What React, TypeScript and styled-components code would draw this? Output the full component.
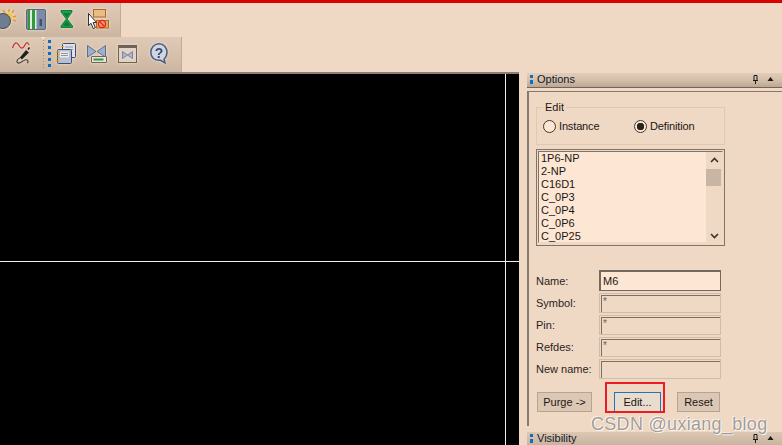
import React from "react";
import styled, { createGlobalStyle } from "styled-components";

const Global = createGlobalStyle`
  html, body { margin: 0; padding: 0; background: #f0d9c4; }
  * { box-sizing: border-box; }
`;

const Page = styled.div`
  position: relative;
  width: 782px;
  height: 445px;
  overflow: hidden;
  display: flex;
  flex-direction: column;
  background: #f0d9c4;
  font-family: "Liberation Sans", Arial, sans-serif;
  font-size: 11px;
  color: #1c1612;
`;
const RedBar = styled.div`
  height: 3px;
  flex: none;
  background: #d90000;
`;
const Toolbar = styled.div<{ $w: number; $h: number; $pad: number; $gap: number }>`
  display: flex;
  align-items: center;
  flex: none;
  width: ${(p) => p.$w}px;
  height: ${(p) => p.$h}px;
  padding: 0 0 2px ${(p) => p.$pad}px;
  gap: ${(p) => p.$gap}px;
  background: linear-gradient(#dfcab7, #d6c0ac 55%, #cbb5a1);
  border-right: 1px solid #c2ac98;
  svg {
    flex: none;
    filter: drop-shadow(0 0 1.5px #efe0d0);
  }
`;
const LeadIcon = styled.span`
  display: flex;
  margin-right: -4px;
`;
const Grip = styled.div`
  position: relative;
  flex: none;
  display: flex;
  gap: 4px;
  height: 35px;
  align-items: center;
  margin: 0 -7px -2px 0;
`;
const GripDots = styled.span`
  width: 1px;
  height: 30px;
  background: repeating-linear-gradient(#8f9c78 0 1px, transparent 1px 3px);
  &::before {
    content: "";
    position: absolute;
    top: 0;
    left: -2px;
    border: 2.5px solid transparent;
    border-top: 3px solid #f0e2d4;
  }
`;
const GripBlue = styled.span`
  width: 3px;
  height: 27px;
  margin-bottom: 2px;
  background: repeating-linear-gradient(#0a6fc2 0 3px, transparent 3px 6px);
`;
const Main = styled.div`
  flex: 1;
  display: flex;
  min-height: 0;
`;
const Canvas = styled.div`
  position: relative;
  flex: none;
  width: 519px;
  background: #000;
  border-top: 2px solid #8d8073;
`;
const VLine = styled.div`
  position: absolute;
  top: 0;
  bottom: 0;
  left: 505px;
  width: 1px;
  background: #f4efe8;
`;
const HLine = styled.div`
  position: absolute;
  left: 0;
  right: 0;
  top: 187px;
  height: 1px;
  background: #f4efe8;
`;
const Side = styled.div`
  flex: 1;
  margin-left: 8px;
  padding-top: 1px;
  display: flex;
  flex-direction: column;
  min-width: 0;
`;
const Head = styled.div`
  flex: none;
  height: 15px;
  display: flex;
  align-items: center;
  padding: 0 0 2px 3px;
  background: linear-gradient(#e2cdb9, #d4bfab 50%, #bda793);
  border-bottom: 1px solid #6f655b;
  position: relative;
`;
const HeadDots = styled.span`
  width: 3px;
  height: 9px;
  margin-right: 4px;
  background: linear-gradient(#0a6fc2 0 3.5px, transparent 3.5px 5.5px, #0a6fc2 5.5px);
`;
const HeadTitle = styled.span`
  flex: 1;
  font-size: 11px;
  color: #10182a;
`;
const HeadIcons = styled.span`
  display: flex;
  align-items: center;
  gap: 8px;
  margin-right: -4px;
`;
const Body = styled.div`
  flex: none;
  height: 335px;
  margin-top: 3px;
  border-left: 2px solid #867a6e;
  border-top: 1px solid #867a6e;
  padding: 9px 0 0 7px;
  display: flex;
  flex-direction: column;
  width: 100%;
`;
const Group = styled.fieldset`
  width: 189px;
  height: 44px;
  margin: 0;
  padding: 6px 0 0 6px;
  border: 1px solid #e0c8b3;
  display: flex;
  align-items: flex-start;
  font-size: 11px;
  min-inline-size: 0;
`;
const Legend = styled.legend`
  margin-left: 0;
  padding: 0 2px;
  font-size: 11px;
  line-height: 12px;
`;
const RadioLabel = styled.label<{ $w: number }>`
  display: flex;
  align-items: center;
  width: ${(p) => p.$w}px;
  gap: 3px;
  height: 14px;
  letter-spacing: -0.15px;
`;
const Radio = styled.input.attrs({ type: "radio" })`
  appearance: none;
  margin: 0;
  width: 13px;
  height: 13px;
  border: 1px solid #40382f;
  border-radius: 50%;
  background: #fde7d4;
  position: relative;
  &:checked {
    background: radial-gradient(circle, #2a2420 0 3.5px, #fde7d4 4px);
  }
`;
const ListOuter = styled.div`
  margin-top: 4px;
  width: 189px;
  height: 97px;
  padding: 1px 1px 2px 1px;
  border: 1px solid #7e7469;
  background: #f0d9c4;
  flex: none;
`;
const ListInner = styled.div`
  height: 100%;
  display: flex;
  border: 1px solid #7e7469;
  border-right-color: #f0d9c4;
  border-bottom-color: #f0d9c4;
  background: #fde7d4;
`;
const Items = styled.ul`
  flex: 1;
  margin: 0;
  padding: 0 0 0 2px;
  list-style: none;
  line-height: 13px;
  overflow: hidden;
  font-size: 11px;
`;
const ScrollBar = styled.div`
  position: relative;
  flex: none;
  width: 16px;
  background: #f0d9c4;
  display: flex;
  flex-direction: column;
  align-items: center;
  justify-content: space-between;
  padding: 5px 0 3px;
`;
const Thumb = styled.div`
  position: absolute;
  top: 17px;
  left: 0;
  width: 15px;
  height: 17px;
  background: #c9b5a3;
`;
const Form = styled.div`
  margin-top: 24px;
  display: grid;
  grid-template-columns: 63px 122px;
  row-gap: 2px;
  align-items: center;
`;
const FieldLabel = styled.label`
  font-size: 11px;
  color: #2a231d;
`;
const Field = styled.input<{ $on?: boolean }>`
  width: 122px;
  height: ${(p) => (p.$on ? 21 : 20)}px;
  margin: 0;
  padding: ${(p) => (p.$on ? "0 0 0 3px" : "0 0 3px 3px")};
  font-family: inherit;
  font-size: ${(p) => (p.$on ? 11 : 10)}px;
  color: ${(p) => (p.$on ? "#1c1612" : "#6b6055")};
  outline: none;
  background: ${(p) => (p.$on ? "#fde7d4" : "#f0d9c4")};
  border: 1px solid ${(p) => (p.$on ? "#75695d" : "#d3bca7")};
  box-shadow: ${(p) => (p.$on ? "inset 1px 1px 0 #75695d" : "inset 1px 1px 0 #f0d9c4, inset 2px 2px 0 #7b6f63")};
`;
const Buttons = styled.div`
  margin-top: 13px;
  padding-left: 1px;
  display: flex;
  gap: 22px;
`;
const Btn = styled.button<{ $w: number }>`
  position: relative;
  width: ${(p) => p.$w}px;
  height: 20px;
  padding: 0;
  font-family: inherit;
  font-size: 11px;
  color: #1c1612;
  background: #dcc7b4;
  border: 1px solid #b6a391;
  &:last-child {
    margin-left: -6px;
  }
`;
const EditBtn = styled(Btn)`
  background: #e9dccf;
  border: 1px solid #1877bd;
  border-bottom-color: #e9dccf;
`;
const RedBox = styled.span`
  position: absolute;
  top: -11px;
  left: -10px;
  right: -5px;
  bottom: -2px;
  border: 2px solid #ed1c24;
  pointer-events: none;
`;
const VisHead = styled(Head)`
  margin-top: 6px;
  background: linear-gradient(#dcc7b3, #c8b29e);
`;
const Watermark = styled.div`
  position: absolute;
  left: 591px;
  top: 414px;
  font-size: 18px;
  line-height: 21px;
  letter-spacing: 0.3px;
  color: #a39c96;
  text-shadow: 0 0 1px #fff, 1px 1px 0 rgba(255, 255, 255, 0.8), -1px -1px 0 rgba(255, 255, 255, 0.55);
  white-space: nowrap;
`;

const Sun = () => (
  <svg width="16" height="20" viewBox="0 0 16 20">
    <g stroke="#e8961a" strokeWidth="1.4">
      <path d="M9 0v3M14 1l-2 3M16 7l-3 1M16 12l-3-1M3 1l2 3" />
    </g>
    <circle cx="8" cy="8" r="4.5" fill="#f6c24a" />
    <circle cx="3" cy="12" r="7.500" fill="#6f7d90" stroke="#434c5c" />
  </svg>
);
const Panels = () => (
  <svg width="20" height="21" viewBox="0 0 20 21">
    <rect x="0.5" y="0.5" width="19" height="20" rx="1.5" fill="#7d8ca6" stroke="#5a6780" />
    <rect x="2" y="1" width="2" height="19" fill="#2f9a3e" />
    <rect x="4" y="1" width="2" height="19" fill="#e4ecdf" />
    <rect x="6" y="1" width="3" height="19" fill="#2f9a3e" />
    <rect x="9" y="1" width="1.500" height="19" fill="#e4ecdf" />
    <rect x="13.500" y="10" width="2.500" height="7" fill="#44526c" />
  </svg>
);
const Hourglass = () => (
  <svg width="14" height="18" viewBox="0 0 14 18">
    <path d="M1 0.5h11v1.5L7.5 8.6v.8L12.5 16v1.5H1V16l5-6.6v-.8L1 2z" fill="#16a24a" stroke="#0b6a30" strokeWidth=".8" />
    <path d="M3.4 3h6.6L6.7 7.5z" fill="#0e7a38" />
    <path d="M6.7 11l4 5H2.8z" fill="#0c7c37" />
  </svg>
);
const CursorIcon = () => (
  <svg width="21" height="21" viewBox="0 0 21 21">
    <rect x="5.5" y="0.5" width="12" height="7.5" fill="#e6bd85" stroke="#b4691f" />
    <rect x="8.5" y="11.5" width="12" height="7.5" fill="#e0a868" stroke="#b4691f" />
    <circle cx="14" cy="15" r="3.6" fill="none" stroke="#ee1c25" strokeWidth="1.3" />
    <path d="M11.5 12.5l5 5" stroke="#ee1c25" strokeWidth="1.2" />
    <path d="M0.5 4.5v12l2.6-2.2 2.2 5.3 2-1-2.2-5 3.4-.2z" fill="#fff" stroke="#1a1a1a" strokeWidth=".9" />
  </svg>
);
const Probe = () => (
  <svg width="20" height="23" viewBox="0 0 20 23">
    <path d="M0.5 6C3 -1 5 0 7 3.5S11 7 13 3 16 1 17 3" fill="none" stroke="#c8322a" strokeWidth="1.3" />
    <path d="M14 8l3 2.5-7 7-2.2-2z" fill="#24201d" />
    <path d="M16 7.5l1.5-2" stroke="#24201d" strokeWidth="1.4" />
    <path d="M8 16c-3 1-4 4-2 5s4-2 7-3 4 2 2 3" fill="none" stroke="#4a423b" strokeWidth="1.2" />
  </svg>
);
const Stack = () => (
  <svg width="21" height="21" viewBox="0 0 21 21">
    <rect x="7.5" y="0.5" width="13" height="14" rx="1" fill="#dfe2e6" stroke="#3d4d72" />
    <path d="M10 4h8M10 6.5h8" stroke="#8b95a8" />
    <rect x="2.5" y="6.5" width="14" height="14" rx="1" fill="#b7c0d2" stroke="#3d4d72" />
    <rect x="5" y="8.5" width="9" height="6" fill="#eceae4" />
    <path d="M6 10.5h7M6 12.5h7" stroke="#8b95a8" />
    <path d="M0.5 9h4M0.5 12h4M0.5 15h4M0.5 18h4M6 3.5h3" stroke="#e0a21e" strokeWidth="1.2" />
  </svg>
);
const Bowtie = () => (
  <svg width="20" height="18" viewBox="0 0 20 18">
    <path d="M0.5 0.5L9 6.5 0.5 12zM18.5 0.5L10 6.5l8.500 5.500z" fill="#9fb0cc" stroke="#5d6e8d" />
    <rect x="4.500" y="11.500" width="15" height="6" rx=".5" fill="#ece2d6" stroke="#6e655b" />
    <rect x="6.500" y="13.500" width="10" height="2" fill="#2f9a3e" />
  </svg>
);
const WindowIcon = () => (
  <svg width="19" height="18" viewBox="0 0 19 18">
    <rect x="0.500" y="0.500" width="18" height="17" fill="#e4d3c2" stroke="#6e6358" />
    <rect x="0.500" y="0.500" width="18" height="2.500" fill="#6e6358" />
    <path d="M4.500 6.500l5 3.500-5 3.500zM14.500 6.500l-5 3.500 5 3.500z" fill="#a8b8d2" stroke="#6477a0" strokeWidth=".8" />
  </svg>
);
const Help = () => (
  <svg width="21" height="21" viewBox="0 0 21 21">
    <path d="M11 0.800c4.500 0 8 3.500 8 8.500 0 3-1.500 5.500-3 7l1 3.500-4.500-2.500C6 17.800 2.800 14 2.800 9.300 2.800 4.300 6.500 0.800 11 0.800z" fill="#cfd6e4" stroke="#4e5c7c" strokeWidth="1.500" />
    <text x="11" y="14.500" textAnchor="middle" fontFamily="Liberation Sans, sans-serif" fontWeight="700" fontSize="14" fill="#3c4a6a">?</text>
  </svg>
);
const ChevUp = () => (
  <svg width="9" height="6" viewBox="0 0 9 6"><path d="M1 5l3.500-3.500L8 5" fill="none" stroke="#3a332c" strokeWidth="1.600" /></svg>
);
const ChevDown = () => (
  <svg width="9" height="6" viewBox="0 0 9 6"><path d="M1 1l3.500 3.500L8 1" fill="none" stroke="#3a332c" strokeWidth="1.600" /></svg>
);
const HeadControls = () => (
  <HeadIcons>
    <svg width="7" height="9" viewBox="0 0 7 9">
      <path d="M1 5.500h5M2 0.500h3v5H2zM3.500 5.500V9" fill="none" stroke="#1a1a1a" />
    </svg>
    <svg width="7" height="4" viewBox="0 0 7 4"><path d="M0.500 4L3.500 0l3 4z" fill="#1a1a1a" /></svg>
    <svg width="4" height="7" viewBox="0 0 4 7"><path d="M0 1h4M0 6h4" stroke="#1a1a1a" /></svg>
  </HeadIcons>
);

const names = ["1P6-NP", "2-NP", "C16D1", "C_0P3", "C_0P4", "C_0P6", "C_0P25"];
const fields = [
  { label: "Name:", value: "M6", on: true },
  { label: "Symbol:", value: "*" },
  { label: "Pin:", value: "*" },
  { label: "Refdes:", value: "*" },
  { label: "New name:", value: "" },
];

export default function App() {
  return (
    <Page>
      <Global />
      <RedBar />
      <Toolbar $w={121} $h={34} $pad={0} $gap={14}>
        <LeadIcon>
          <Sun />
        </LeadIcon>
        <Panels />
        <Hourglass />
        <CursorIcon />
      </Toolbar>
      <Toolbar $w={182} $h={35} $pad={12} $gap={11}>
        <Probe />
        <Grip>
          <GripDots />
          <GripBlue />
        </Grip>
        <Stack />
        <Bowtie />
        <WindowIcon />
        <Help />
      </Toolbar>
      <Main>
        <Canvas>
          <VLine />
          <HLine />
        </Canvas>
        <Side>
          <Head>
            <HeadDots />
            <HeadTitle>Options</HeadTitle>
            <HeadControls />
          </Head>
          <Body>
            <Group>
              <Legend>Edit</Legend>
              <RadioLabel $w={91}>
                <Radio name="edit" />
                Instance
              </RadioLabel>
              <RadioLabel $w={80}>
                <Radio name="edit" defaultChecked />
                Definition
              </RadioLabel>
            </Group>
            <ListOuter>
              <ListInner>
                <Items>
                  {names.map((n) => (
                    <li key={n}>{n}</li>
                  ))}
                </Items>
                <ScrollBar>
                  <ChevUp />
                  <Thumb />
                  <ChevDown />
                </ScrollBar>
              </ListInner>
            </ListOuter>
            <Form>
              {fields.map((f) => (
                <React.Fragment key={f.label}>
                  <FieldLabel>{f.label}</FieldLabel>
                  <Field $on={f.on} readOnly value={f.value} aria-label={f.label} />
                </React.Fragment>
              ))}
            </Form>
            <Buttons>
              <Btn $w={55}>Purge -&gt;</Btn>
              <EditBtn $w={47}>
                Edit...
                <RedBox />
              </EditBtn>
              <Btn $w={43}>Reset</Btn>
            </Buttons>
          </Body>
          <VisHead>
            <HeadDots />
            <HeadTitle>Visibility</HeadTitle>
            <HeadControls />
          </VisHead>
        </Side>
      </Main>
      <Watermark>CSDN @uxiang_blog</Watermark>
    </Page>
  );
}
